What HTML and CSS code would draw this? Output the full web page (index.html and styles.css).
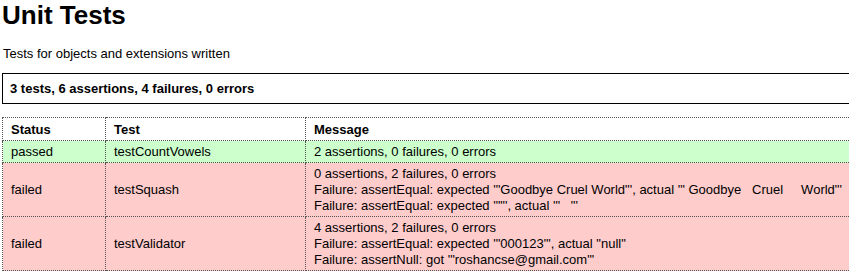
FILE: index.html
```html
<!DOCTYPE html>
<html>
<head>
<meta charset="utf-8">
<title>Unit Tests</title>
<link rel="stylesheet" href="styles.css">
</head>
<body>
<div class="page">
  <h1 class="title">Unit Tests</h1>
  <p class="subtitle">Tests for objects and extensions written</p>
  <div class="summary">3 tests, 6 assertions, 4 failures, 0 errors</div>
  <table class="results">
    <thead>
      <tr>
        <th class="col-status">Status</th>
        <th class="col-test">Test</th>
        <th class="col-msg">Message</th>
      </tr>
    </thead>
    <tbody>
      <tr class="passed">
        <td>passed</td>
        <td>testCountVowels</td>
        <td class="msg">2 assertions, 0 failures, 0 errors</td>
      </tr>
      <tr class="failed">
        <td>failed</td>
        <td>testSquash</td>
        <td class="msg">0 assertions, 2 failures, 0 errors<br>Failure: assertEqual: expected '"Goodbye Cruel World"', actual '" Goodbye   Cruel     World"'<br>Failure: assertEqual: expected '""', actual '"   "'</td>
      </tr>
      <tr class="failed">
        <td>failed</td>
        <td>testValidator</td>
        <td class="msg">4 assertions, 2 failures, 0 errors<br>Failure: assertEqual: expected '"000123"', actual "null"<br>Failure: assertNull: got '"roshancse@gmail.com"'</td>
      </tr>
    </tbody>
  </table>
</div>
</body>
</html>
```
FILE: styles.css
```css
html, body {
  margin: 0;
  padding: 0;
  overflow: hidden;
  background: #fff;
}
body {
  font-family: "Liberation Sans", Arial, sans-serif;
  font-size: 13px;
  line-height: 16px;
  color: #000;
}
.page {
  width: max-content;
  padding: 0 0 0 2px;
}
.title {
  margin: 0;
  font-size: 26px;
  line-height: 30px;
  font-weight: bold;
}
.subtitle {
  margin: 16px 0 0 1px;
}
.summary {
  margin-top: 11px;
  border: 1px solid #000;
  padding: 7px 7px 6px;
  font-weight: bold;
}
.results {
  margin-top: 13px;
  border-collapse: collapse;
  border: 1px dotted #555;
}
.results th,
.results td {
  border: 1px dotted #555;
  padding: 3px 8px 2px;
  text-align: left;
  vertical-align: middle;
}
.results th {
  padding-top: 4px;
}
.col-status { width: 86px; }
.col-test { width: 183px; }
.results .msg,
.results .col-msg { padding-right: 30px; }
.msg { white-space: pre; }
.passed td { background: #ccffcc; }
.failed td { background: #ffcccc; }
```
